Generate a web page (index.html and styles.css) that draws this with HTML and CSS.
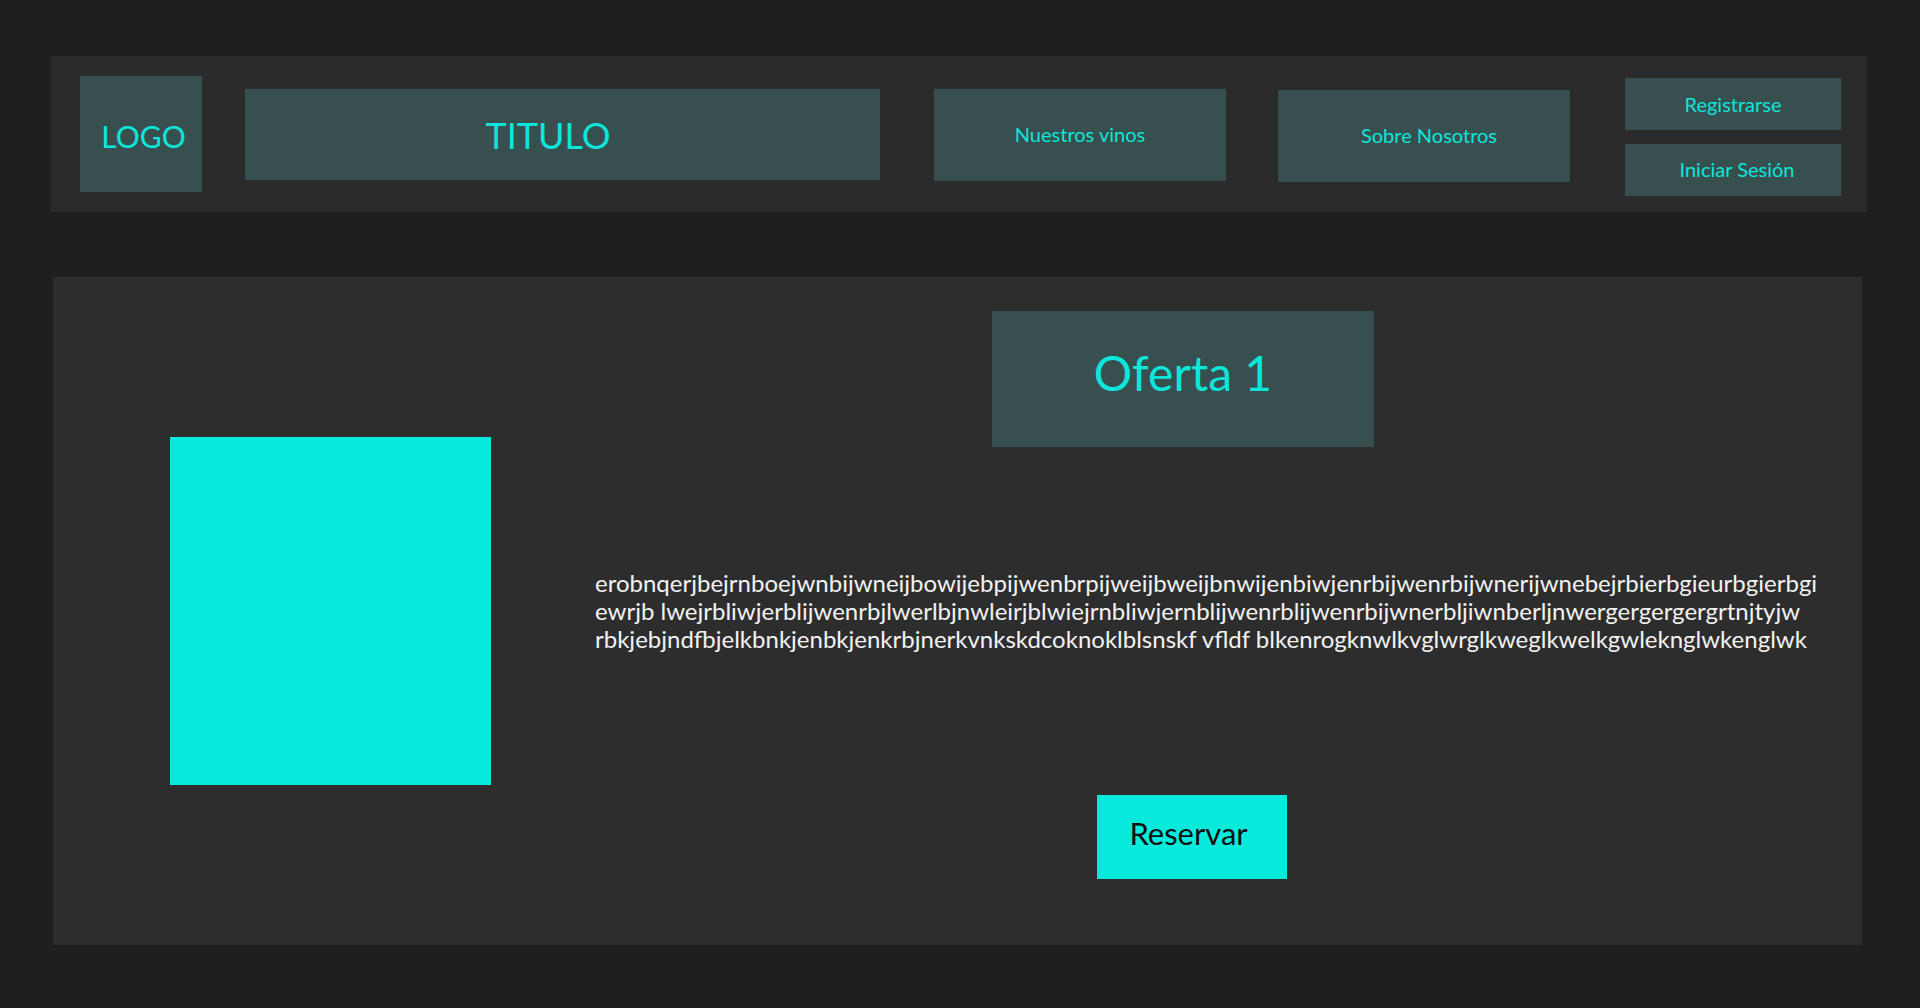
FILE: index.html
```html
<!DOCTYPE html>
<html lang="es">
<head>
<meta charset="utf-8">
<title>Vinos</title>
<link rel="stylesheet" href="styles.css">
</head>
<body>
<header class="header">
  <div class="box logo">LOGO</div>
  <div class="box titulo">TITULO</div>
  <a class="box nav nav-vinos" href="#">Nuestros vinos</a>
  <a class="box nav nav-sobre" href="#">Sobre Nosotros</a>
  <div class="auth">
    <a class="box auth-btn" href="#">Registrarse</a>
    <a class="box auth-btn auth-login" href="#">Iniciar Sesión</a>
  </div>
</header>
<main class="panel">
  <div class="media-col">
    <div class="media"></div>
  </div>
  <div class="content-col">
    <h1 class="box oferta">Oferta 1</h1>
    <p class="desc">erobnqerjbejrnboejwnbijwneijbowijebpijwenbrpijweijbweijbnwijenbiwjenrbijwenrbijwnerijwnebejrbierbgieurbgierbgiewrjb lwejrbliwjerblijwenrbjlwerlbjnwleirjblwiejrnbliwjernblijwenrblijwenrbijwnerbljiwnberljnwergergergergrtnjtyjw<br>rbkjebjndfbjelkbnkjenbkjenkrbjnerkvnkskdcoknoklblsnskf vfldf blkenrogknwlkvglwrglkweglkwelkgwleknglwkenglwk</p>
    <button class="reservar">Reservar</button>
  </div>
</main>
</body>
</html>
```

FILE: styles.css
```css
* { box-sizing: border-box; }

html, body {
  margin: 0;
  padding: 0;
}

body {
  background: #1f1f1f;
  font-family: Lato, "Open Sans", sans-serif;
  width: 1920px;
  height: 1008px;
  overflow: hidden;
}

.box {
  background: #374f4f;
  color: #0ce6da;
  display: flex;
  align-items: center;
  justify-content: center;
  text-decoration: none;
}

.header {
  margin: 56px 53px 0 51px;
  height: 156px;
  background: #2b2b2b;
  display: flex;
  align-items: center;
  padding: 0 26px 0 29px;
}

.logo {
  width: 122px;
  height: 116px;
  font-size: 30px;
  padding-top: 4px;
  padding-left: 5px;
}

.titulo {
  margin-left: 43px;
  width: 635px;
  height: 91px;
  font-size: 36px;
  padding-top: 2px;
  padding-right: 29px;
}

.nav {
  width: 292px;
  height: 92px;
  font-size: 20px;
}

.nav-vinos { margin-left: 54px; margin-top: 2px; padding-bottom: 2px; }
.nav-sobre { margin-left: 52px; margin-top: 4px; padding-left: 10px; padding-bottom: 2px; }

.auth {
  margin-left: 55px;
  width: 216px;
  display: flex;
  flex-direction: column;
  gap: 14px;
  margin-top: 6px;
}

.auth-btn {
  height: 52px;
  font-size: 20px;
}

.auth-login {
  padding-left: 8px;
  padding-bottom: 2px;
}

.panel {
  margin: 65px 58px 0 53px;
  height: 668px;
  background: #2d2d2d;
  display: flex;
}

.media-col {
  width: 542px;
  padding-left: 117px;
  display: flex;
  align-items: center;
}

.media {
  width: 321px;
  height: 348px;
  background: #07eadc;
}

.content-col {
  flex: 1;
  display: flex;
  flex-direction: column;
  align-items: flex-start;
  padding-top: 34px;
}

.oferta {
  margin: 0 0 0 397px;
  width: 382px;
  height: 136px;
  font-size: 48px;
  font-weight: 400;
  padding-bottom: 14px;
}

.desc {
  margin: 122px 0 0 0;
  width: 1228px;
  color: #f2f2f2;
  font-size: 24px;
  line-height: 28px;
  word-break: break-all;
}

.reservar {
  margin: 142px 0 0 502px;
  width: 190px;
  height: 84px;
  background: #07eadc;
  border: none;
  color: #111;
  font-family: Lato, "Open Sans", sans-serif;
  font-size: 31px;
  padding: 0 7px 8px 0;
}
```
